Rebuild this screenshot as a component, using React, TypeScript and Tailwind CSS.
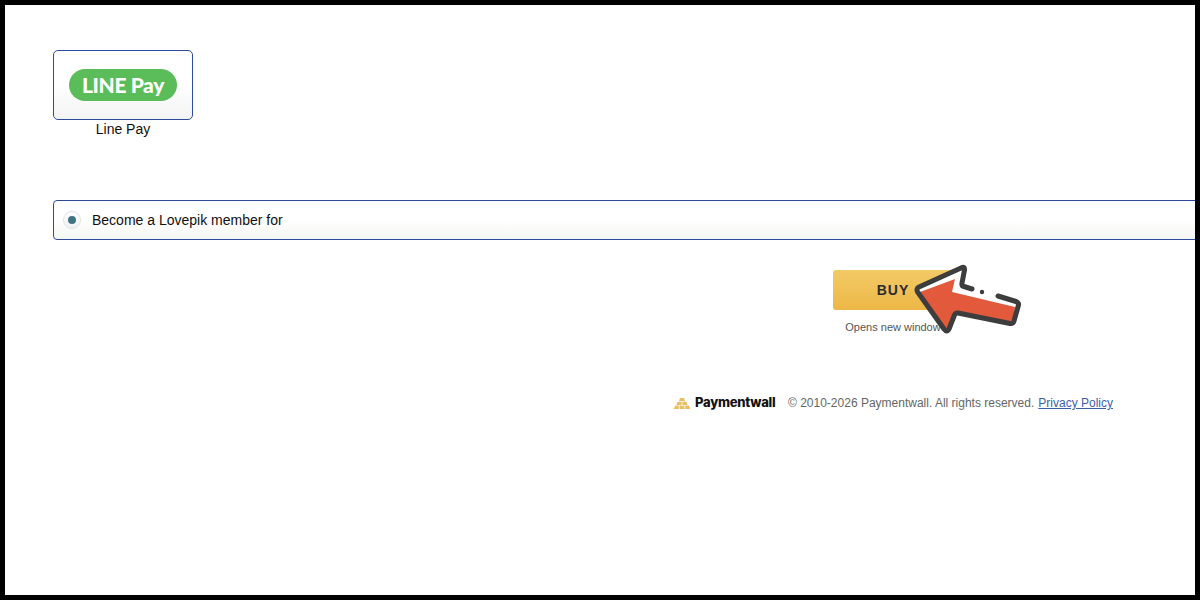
export default function App() {
  return (
    <div className="relative h-[600px] w-[1200px] overflow-hidden border-[5px] border-black bg-white font-['Liberation_Sans',Arial,sans-serif] text-[14px] text-[#111]">
      <div className="flex flex-col pl-[48px] pt-[45px]">
        <div className="flex w-[140px] flex-col items-center">
          <div className="flex h-[70px] w-[140px] items-center justify-center rounded-[5px] border border-[#2d4a9e] bg-gradient-to-b from-white from-50% to-[#f3f3f3]">
            <div className="flex h-[32px] w-[108px] items-center justify-center rounded-full bg-[#5bbd5a] font-['Lato',sans-serif] text-[21px] font-black tracking-[-0.4px] text-white">
              LINE Pay
            </div>
          </div>
          <div className="leading-[18px]">Line Pay</div>
        </div>

        <div className="mt-[62px] flex h-[40px] w-[1160px] items-center rounded-[4px] border border-[#2d4a9e] bg-gradient-to-b from-white from-50% to-[#f4f6f2] pl-[9px]">
          <div className="flex h-[18px] w-[18px] items-center justify-center rounded-full border border-[#dfe3e8] bg-gradient-to-b from-white to-[#f0f0f0]">
            <div className="h-[8px] w-[8px] rounded-full bg-[#3f7583]" />
          </div>
          <span className="ml-[11px]">Become a Lovepik member for</span>
        </div>

        <div className="ml-[780px] mt-[30px] flex w-[120px] flex-col items-center">
          <div className="flex h-[40px] w-[120px] items-center justify-center rounded-[3px] bg-gradient-to-b from-[#f3ca67] to-[#ecb745] text-[14px] font-bold tracking-[1px] text-[#2b2b33]">
            BUY
          </div>
          <div className="mt-[11px] whitespace-nowrap text-[11px] leading-[13px] text-[#555]">Opens new window</div>
        </div>

        <div className="ml-[620px] mt-[59px] flex h-[20px] w-[440px] items-center whitespace-nowrap text-[12px] text-[#666]">
          <svg width="18" height="11" viewBox="0 0 18 11" className="mr-[4px] shrink-0">
            <g fill="#e9bf66">
              <path d="M7 0 H11 L12 3 H6 Z" />
              <path d="M4.5 3.8 H8.6 L8.6 7 H3.4 Z" />
              <path d="M9.4 3.8 H13.5 L14.6 7 H9.4 Z" />
              <path d="M2.2 7.6 H5.8 V11 H0.6 Z" />
              <path d="M6.6 7.6 H11.4 V11 H6.6 Z" />
              <path d="M12.2 7.6 H15.8 L17.4 11 H12.2 Z" />
            </g>
          </svg>
          <span className="w-[94px] font-['Inter',sans-serif] text-[13px] font-extrabold tracking-[-0.25px] text-[#111]">Paymentwall</span>
          <span className="ml-[-1px]">© 2010-2026 Paymentwall. All rights reserved.</span>
          <span className="ml-[4px] text-[#3b5fa8] underline">Privacy Policy</span>
        </div>
      </div>

      <svg width="115" height="76" viewBox="0 0 115 76" className="absolute left-[905px] top-[255px]">
        <path d="M7 29 L54 7 L52 26 L108 42 L103 63 L46 53 L37 71 Z" fill="#fff" />
        <path d="M10 32 L45 19 L42 32 L105 47 L103 63 L46 53 L37 71 Z" fill="#e2593c" />
        <path
          d="M62 29 L54 26.5 Q51.5 26 52 23 L54.5 10 Q55 6 51 8 L9 27 Q5.5 29 8 32.5 L34 69 Q37 73 39 69 L44.5 55 Q45.5 52.5 48 53 L100 63.5 Q103 64 104 61 L108.5 45 Q109 43 106 41.5 L88 36"
          fill="none"
          stroke="#3d3d3d"
          strokeWidth="5"
          strokeLinecap="round"
          strokeLinejoin="round"
        />
        <circle cx="72" cy="32" r="2.2" fill="#3d3d3d" />
      </svg>
    </div>
  );
}
